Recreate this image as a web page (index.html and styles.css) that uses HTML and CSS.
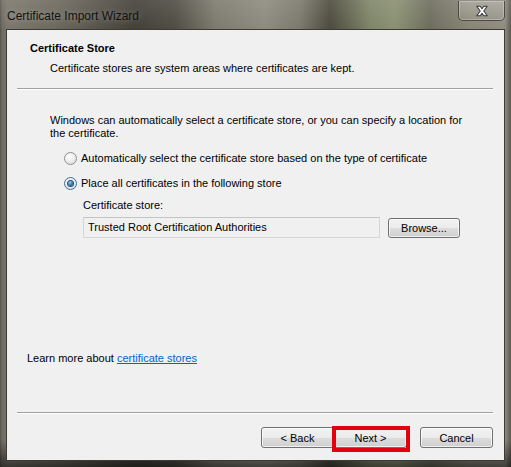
FILE: index.html
```html
<!DOCTYPE html>
<html>
<head>
<meta charset="utf-8">
<link rel="stylesheet" href="styles.css">
</head>
<body>
<div class="window">
  <div class="titlebar">
    <span class="title">Certificate Import Wizard</span>
    <span class="close">
      <svg width="14" height="12" viewBox="0 0 16 13">
        <path d="M2 1 H6 L8 4 L10 1 H14 L10 6.5 L14 12 H10 L8 9 L6 12 H2 L6 6.5 Z" fill="#fff" stroke="#3a3a3a" stroke-width="1.2" stroke-linejoin="round"/>
      </svg>
    </span>
  </div>
  <div class="client">
    <div class="header">
      <div class="h-title">Certificate Store</div>
      <div class="h-desc">Certificate stores are system areas where certificates are kept.</div>
    </div>
    <div class="sep sep-top"></div>
    <div class="body">
      <p class="intro">Windows can automatically select a certificate store, or you can specify a location for the certificate.</p>
      <div class="radio-row first">
        <span class="radio"></span>
        <span>Automatically select the certificate store based on the type of certificate</span>
      </div>
      <div class="radio-row second">
        <span class="radio checked"><span class="dot"></span></span>
        <span>Place all certificates in the following store</span>
      </div>
      <div class="store">
        <div class="store-label">Certificate store:</div>
        <div class="store-row">
          <div class="field">Trusted Root Certification Authorities</div>
          <button class="btn browse">Browse...</button>
        </div>
      </div>
      <div class="spacer"></div>
      <div class="learn">Learn more about <a class="link">certificate stores</a></div>
    </div>
    <div class="sep sep-bottom"></div>
    <div class="footer">
      <button class="btn">&lt; Back</button>
      <span class="next-wrap">
        <button class="btn">Next &gt;</button>
        <span class="highlight"></span>
      </span>
      <button class="btn cancel">Cancel</button>
    </div>
  </div>
</div>
</body>
</html>
```

FILE: styles.css
```css
html, body {
  margin: 0;
  padding: 0;
}
body {
  width: 511px;
  height: 467px;
  overflow: hidden;
  font-family: "Liberation Sans", Arial, sans-serif;
  font-size: 11px;
  color: #000;
}
.window {
  width: 511px;
  height: 467px;
  display: flex;
  flex-direction: column;
  background:
    linear-gradient(to bottom, rgba(255,255,255,0.10) 0, rgba(0,0,0,0) 30px, rgba(0,0,0,0) 440px, rgba(0,0,0,0.55) 467px),
    linear-gradient(to right, #55524a 0, #6e6b62 2px, #7b776c 8px, #6a665b 60px, #423f37 135px, #4f4c43 175px, #7c796d 215px, #8d8a7e 265px, #7a786b 300px, #4b4a3c 330px, #7e8467 370px, #8a9071 395px, #6d6c5d 430px, #888576 470px, #8f8c80 505px, #5a574f 511px);
  box-sizing: border-box;
}
.titlebar {
  height: 29px;
  display: flex;
  justify-content: space-between;
  align-items: flex-start;
}
.title {
  margin-left: 7px;
  margin-top: 9px;
  font-size: 12px;
  line-height: 14px;
  color: #111;
  text-shadow: 0 0 6px rgba(255,255,255,0.35);
}
.close {
  margin-top: 1px;
  margin-right: 6px;
  width: 45px;
  height: 19px;
  border: 1px solid rgba(40,38,32,0.7);
  border-top: none;
  border-radius: 0 0 5px 5px;
  background: linear-gradient(to bottom, rgba(255,255,255,0.22), rgba(255,255,255,0.08));
  box-shadow: inset 0 0 0 1px rgba(255,255,255,0.25);
  display: flex;
  align-items: center;
  justify-content: center;
}
.client {
  flex: 1;
  margin: 0 6px 6px 6px;
  border: 1px solid #3b3a36;
  background: #f0f0f0;
  display: flex;
  flex-direction: column;
}
.header {
  padding: 11px 0 0 23px;
  height: 47px;
  box-sizing: border-box;
}
.h-title {
  font-weight: bold;
  line-height: 14px;
}
.h-desc {
  margin-top: 6px;
  margin-left: 20px;
  line-height: 14px;
}
.sep {
  margin: 0 11px 0 10px;
  border-top: 1px solid #a0a0a0;
  border-bottom: 1px solid #fff;
}
.sep-top {
  margin-top: 11px;
}
.body {
  flex: 1;
  display: flex;
  flex-direction: column;
  padding-left: 43px;
}
.intro {
  margin: 24px 0 0 0;
  line-height: 13px;
  width: 420px;
}
.radio-row {
  display: flex;
  align-items: center;
  height: 16px;
  margin-left: 14px;
  gap: 4px;
}
.radio-row.first {
  margin-top: 10px;
}
.radio-row.second {
  margin-top: 9px;
}
.radio {
  width: 11px;
  height: 11px;
  border-radius: 50%;
  border: 1px solid #8f8f8f;
  background: radial-gradient(circle at 40% 35%, #ffffff 0, #ececec 50%, #d4d4d4 100%);
  display: flex;
  align-items: center;
  justify-content: center;
}
.radio.checked {
  border-color: #3c6f9a;
}
.dot {
  width: 5px;
  height: 5px;
  border-radius: 50%;
  background: radial-gradient(circle at 40% 35%, #8fd0f6 0, #1f6aa8 60%, #0d3f74 100%);
  box-shadow: 0 0 0 1px #2a4e72;
}
.store {
  margin-left: 33px;
  margin-top: 8px;
}
.store-label {
  line-height: 13px;
}
.store-row {
  margin-top: 5px;
  display: flex;
  align-items: flex-start;
  gap: 8px;
}
.field {
  width: 297px;
  height: 21px;
  box-sizing: border-box;
  border: 1px solid #d6d6d6;
  border-top-color: #c4c4c4;
  background: #f0f0f0;
  padding: 0 4px;
  line-height: 19px;
}
.btn {
  font-family: "Liberation Sans", Arial, sans-serif;
  font-size: 11px;
  color: #000;
  width: 73px;
  height: 21px;
  box-sizing: border-box;
  border: 1px solid #707070;
  border-radius: 3px;
  background: linear-gradient(to bottom, #f2f2f2 0, #ebebeb 50%, #dddddd 51%, #cfcfcf 100%);
  box-shadow: inset 0 0 0 1px rgba(255,255,255,0.7);
  padding: 0;
  margin: 0;
}
.browse {
  margin-top: 1px;
  width: 72px;
  height: 20px;
}
.spacer {
  flex: 1;
}
.learn {
  margin-left: -23px;
  line-height: 14px;
  margin-bottom: 47px;
}
.link {
  color: #0066cc;
  text-decoration: underline;
}
.sep-bottom {
  margin-top: 0;
}
.footer {
  display: flex;
  justify-content: flex-end;
  padding: 13px 11px 12px 0;
}
.next-wrap {
  position: relative;
  display: inline-block;
  height: 21px;
}
.highlight {
  position: absolute;
  left: -2px;
  top: -1px;
  width: 78px;
  height: 26px;
  box-sizing: border-box;
  border: 4px solid #e3000f;
}
.cancel {
  margin-left: 13px;
}
```
